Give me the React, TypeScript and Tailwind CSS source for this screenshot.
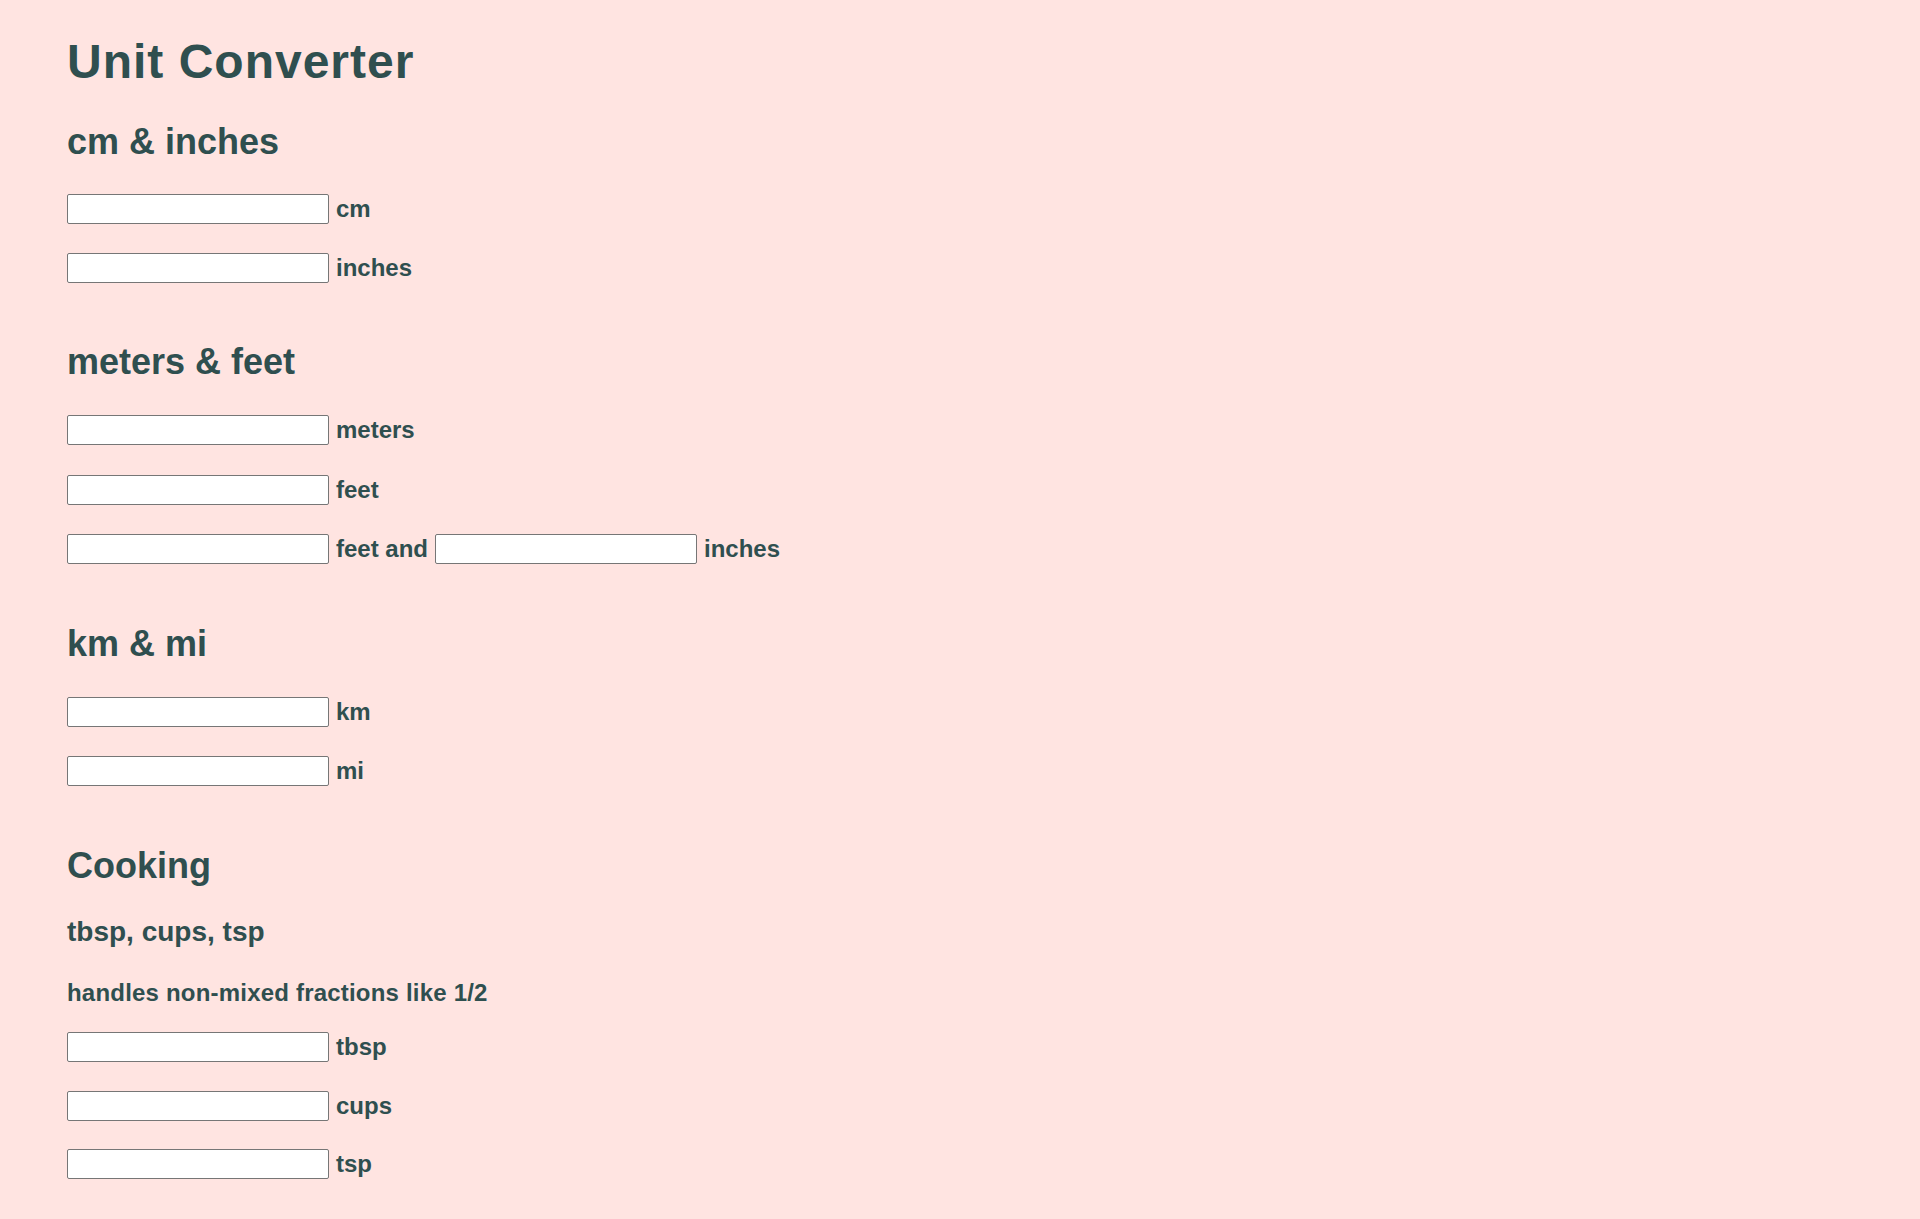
const font = { fontFamily: '"Liberation Sans", Arial, sans-serif' }

function Row({ children }: { children: React.ReactNode }) {
  return <div className="flex items-center h-[30px] whitespace-pre">{children}</div>
}

function Field() {
  return (
    <input
      type="text"
      className="w-[262px] h-[30px] bg-white border border-[#767676] rounded-[2px] outline-none px-1 text-[16px]"
    />
  )
}

function Unit({ label }: { label: string }) {
  return <span className="text-[24px] leading-[30px] pl-[7px] pr-[7px]">{label}</span>
}

export default function App() {
  return (
    <div className="min-h-[1219px] bg-[#ffe4e1] text-[#2f4f4f] font-bold" style={font}>
      <div className="pl-[67px] pt-[38px] pb-[40px]">
        <h1 className="text-[48px] leading-[48px] tracking-[1px]">Unit Converter</h1>

        <h2 className="text-[36px] leading-[36px] mt-[38px]">cm &amp; inches</h2>
        <div className="flex flex-col gap-[29px] mt-[34px]">
          <Row><Field /><Unit label="cm" /></Row>
          <Row><Field /><Unit label="inches" /></Row>
        </div>

        <h2 className="text-[36px] leading-[36px] mt-[61px]">meters &amp; feet</h2>
        <div className="flex flex-col gap-[29.5px] mt-[35px]">
          <Row><Field /><Unit label="meters" /></Row>
          <Row><Field /><Unit label="feet" /></Row>
          <Row><Field /><Unit label="feet and" /><Field /><Unit label="inches" /></Row>
        </div>

        <h2 className="text-[36px] leading-[36px] mt-[62px]">km &amp; mi</h2>
        <div className="flex flex-col gap-[29px] mt-[35px]">
          <Row><Field /><Unit label="km" /></Row>
          <Row><Field /><Unit label="mi" /></Row>
        </div>

        <h2 className="text-[36px] leading-[36px] mt-[62px]">Cooking</h2>
        <h3 className="text-[28px] leading-[28px] mt-[34px]">tbsp, cups, tsp</h3>
        <p className="text-[24px] leading-[24px] mt-[35px] tracking-[0.2px]">handles non-mixed fractions like 1/2</p>
        <div className="flex flex-col gap-[28.5px] mt-[27px]">
          <Row><Field /><Unit label="tbsp" /></Row>
          <Row><Field /><Unit label="cups" /></Row>
          <Row><Field /><Unit label="tsp" /></Row>
        </div>
      </div>
    </div>
  )
}
